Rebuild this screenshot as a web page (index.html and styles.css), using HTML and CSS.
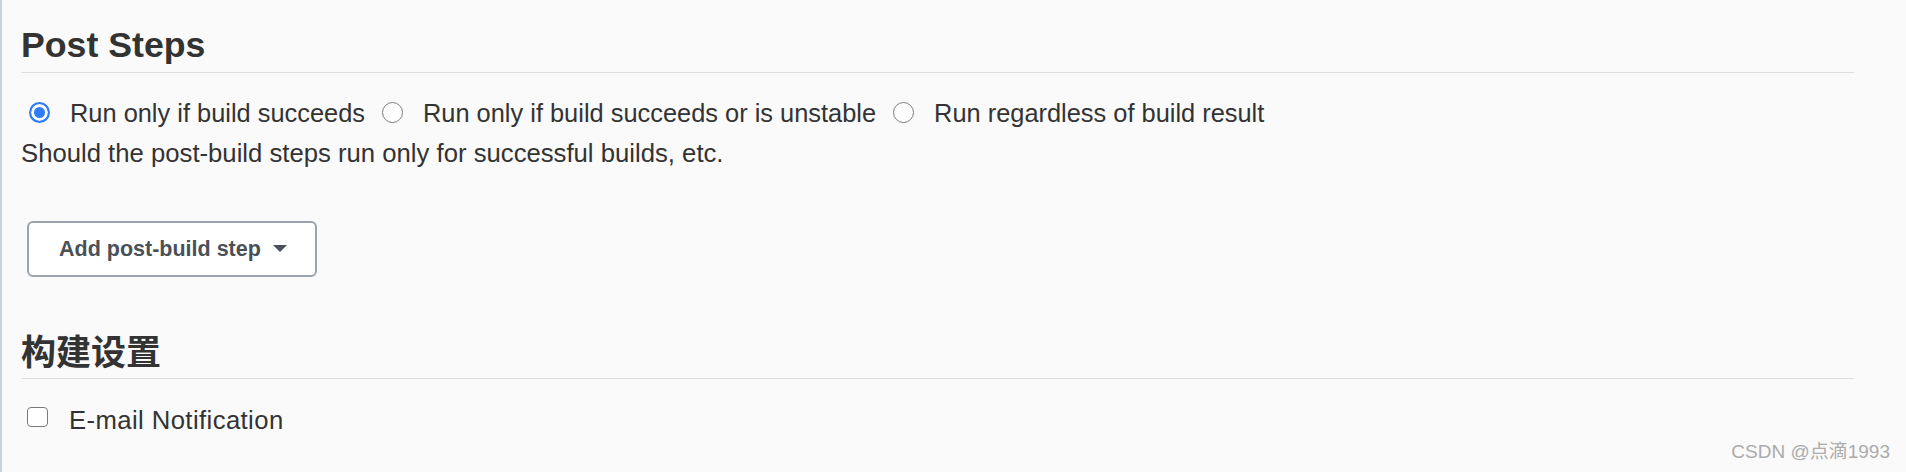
FILE: index.html
```html
<!DOCTYPE html>
<html lang="zh">
<head>
<meta charset="utf-8">
<title>Post Steps</title>
<link rel="stylesheet" href="styles.css">
</head>
<body>
<div class="page">
  <section class="section">
    <h2 class="section-title">Post Steps</h2>
    <div class="radio-row">
      <label class="option"><input type="radio" name="run" class="radio" checked><span>Run only if build succeeds</span></label>
      <label class="option"><input type="radio" name="run" class="radio"><span>Run only if build succeeds or is unstable</span></label>
      <label class="option"><input type="radio" name="run" class="radio"><span>Run regardless of build result</span></label>
    </div>
    <div class="help">Should the post-build steps run only for successful builds, etc.</div>
    <button class="add-btn" type="button">Add post-build step<span class="caret"></span></button>
  </section>
  <section class="section section-cn">
    <h2 class="section-title cn">构建设置</h2>
    <label class="check-row"><input type="checkbox" class="checkbox"><span>E-mail Notification</span></label>
  </section>
</div>
<div class="watermark">CSDN @点滴1993</div>
</body>
</html>
```

FILE: styles.css
```css
html, body {
  margin: 0;
  padding: 0;
  background: #fafafa;
}
body {
  font-family: "Liberation Sans", "Noto Sans CJK SC", sans-serif;
  color: #333;
  height: 472px;
  overflow: hidden;
  position: relative;
}
.page {
  border-left: 2px solid #c9d1da;
  min-height: 472px;
  box-sizing: border-box;
  padding: 0 52px 0 19px;
}
.section-title {
  margin: 0;
  font-size: 35.7px;
  font-weight: bold;
  line-height: 42px;
  padding-bottom: 7px;
  border-bottom: 1px solid #dedede;
  color: #333;
}
.section:first-child .section-title {
  padding-top: 24px;
  padding-bottom: 6px;
}
.cn {
  font-family: "Noto Sans CJK SC", "Liberation Sans", sans-serif;
  font-size: 35px;
  margin-top: 52px;
}
.radio-row {
  margin-top: 22px;
  display: flex;
  align-items: center;
  gap: 17px;
  font-size: 25.4px;
  line-height: 36px;
  padding-left: 8px;
}
.option {
  display: inline-flex;
  align-items: center;
}
.radio {
  appearance: none;
  -webkit-appearance: none;
  margin: 0 20px 0 0;
  width: 21px;
  height: 21px;
  border-radius: 50%;
  border: 1.5px solid #7d7d7d;
  background: #fff;
  box-sizing: border-box;
  position: relative;
  top: -1px;
}
.radio:checked {
  border: 2.5px solid #2f7cf6;
  background: #2f7cf6;
  box-shadow: inset 0 0 0 3px #fff;
}
.help {
  font-size: 25.7px;
  line-height: 36px;
  margin-top: 4px;
}
.add-btn {
  margin: 50px 0 0 6px;
  height: 56px;
  display: inline-flex;
  align-items: center;
  padding: 0 28px 0 30px;
  background: #fff;
  border: 2px solid #9ba4ad;
  border-radius: 6px;
  font-family: "Liberation Sans", sans-serif;
  font-size: 21.5px;
  font-weight: bold;
  color: #4a5057;
  line-height: 52px;
  box-sizing: border-box;
}
.caret {
  width: 0;
  height: 0;
  margin-left: 12px;
  border-left: 7px solid transparent;
  border-right: 7px solid transparent;
  border-top: 7px solid #4a5057;
  position: relative;
  top: -1px;
}
.check-row {
  margin-top: 23px;
  display: flex;
  align-items: center;
  font-size: 25.7px;
  line-height: 36px;
  padding-left: 6px;
  letter-spacing: 0.4px;
}
.checkbox {
  appearance: none;
  -webkit-appearance: none;
  margin: 0 21px 0 0;
  width: 21px;
  height: 20px;
  border: 1.5px solid #7a7a7a;
  border-radius: 4px;
  background: #fff;
  box-sizing: border-box;
  position: relative;
  top: -3px;
}
.watermark {
  position: absolute;
  right: 16px;
  bottom: 9px;
  font-size: 19px;
  color: #ababab;
  line-height: 22px;
}
```
